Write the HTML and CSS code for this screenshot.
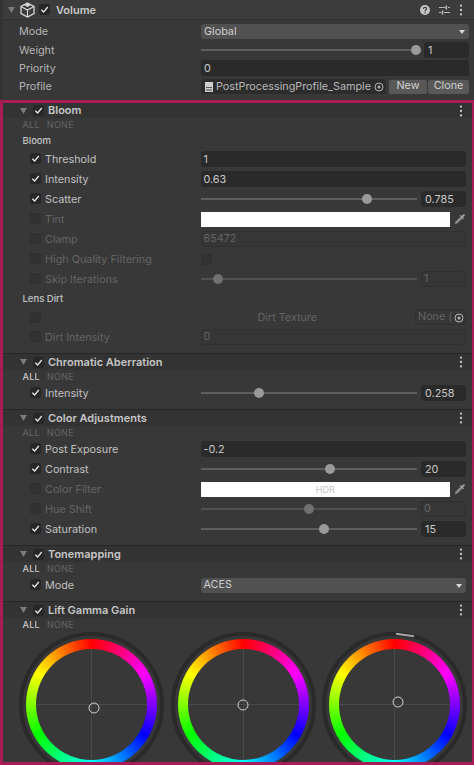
FILE: index.html
```html
<!DOCTYPE html>
<html lang="en">
<head>
<meta charset="utf-8">
<title>Volume Inspector</title>
<link rel="stylesheet" href="styles.css">
</head>
<body>
<svg class="sprite" width="0" height="0" aria-hidden="true">
  <symbol id="check" viewBox="0 0 11 11"><path d="M2.3 5.8 4.6 8 8.8 3" fill="none" stroke="#e6e6e6" stroke-width="1.3"/></symbol>
  <symbol id="tri" viewBox="0 0 8 7"><path d="M0 0h8L4 7z" fill="#7c7c7c"/></symbol>
  <symbol id="dots" viewBox="0 0 4 12"><circle cx="2" cy="1.6" r="1.15" fill="#c8c8c8"/><circle cx="2" cy="6" r="1.15" fill="#c8c8c8"/><circle cx="2" cy="10.4" r="1.15" fill="#c8c8c8"/></symbol>
  <symbol id="target" viewBox="0 0 10 10"><circle cx="5" cy="5" r="4" fill="none" stroke="#b4b4b4" stroke-width="1"/><circle cx="5" cy="5" r="1.5" fill="#b4b4b4"/></symbol>
  <symbol id="picker" viewBox="0 0 12 12"><path d="M6.800 3.400 8.600 5.200 3.200 10.600 1 11 1.400 8.800z" fill="#8e8e8e"/><path d="M5.800 2.800 9.200 6.200 10 5.400 8.900 4.300 10.800 2.400A1 1 0 0 0 9.600 1.200L7.700 3.100 6.600 2z" fill="#a8a8a8"/></symbol>
</svg>

<main class="inspector">
  <header class="comp-head">
    <svg class="tri-top" width="7" height="6"><use href="#tri"/></svg>
    <svg class="cube" width="15" height="16" viewBox="0 0 15 16"><path d="M7.5 1 14 4.4v7.2L7.5 15 1 11.6V4.4z" fill="none" stroke="#d8d8d8" stroke-width="1.3"/><path d="M1 4.4 7.5 8 14 4.4M7.5 8v7" fill="none" stroke="#d8d8d8" stroke-width="1.1"/><path d="M4 3 7.5 1.4 11 3 7.5 5z" fill="#d8d8d8"/></svg>
    <span class="cb on"><svg width="11" height="11"><use href="#check"/></svg></span>
    <strong class="comp-title">Volume</strong>
    <span class="head-icons">
      <svg width="10" height="10" viewBox="0 0 10 10"><circle cx="5" cy="5" r="5" fill="#c4c4c4"/><path d="M3.4 3.9c0-2 3.3-2 3.3-.1 0 1.200-1.700 1.200-1.700 2.400" fill="none" stroke="#3a3a3a" stroke-width="1.100"/><circle cx="5" cy="7.800" r=".7" fill="#3a3a3a"/></svg>
      <svg width="11" height="10" viewBox="0 0 11 10"><path d="M0 2.500h6M9 2.500h2M0 7.500h2M5 7.500h6" stroke="#b8b8b8" stroke-width="1.200"/><path d="M6.500 .5h1.600v4H6.500zM2.700 5.500h1.600v4H2.700z" fill="#b8b8b8"/></svg>
      <svg width="4" height="12"><use href="#dots"/></svg>
    </span>
  </header>

  <section class="volume-fields">
    <div class="vrow"><span>Mode</span><div class="dropdown">Global<i class="caret"></i></div></div>
    <div class="vrow"><span>Weight</span><div class="slider"><div class="track"><i class="thumb" style="left:98%"></i></div><div class="field num">1</div></div></div>
    <div class="vrow"><span>Priority</span><div class="field">0</div></div>
    <div class="vrow"><span>Profile</span>
      <div class="profile">
        <div class="field objfield"><svg class="asset" width="8" height="10" viewBox="0 0 8 10"><path d="M0 0h8v10H0z" fill="#cfcfcf"/><path d="M1 5h6v1H1z" fill="#555"/><path d="M1 7h6v2H1z" fill="#888"/></svg><span class="objname">PostProcessingProfile_Sample</span><svg width="10" height="10"><use href="#target"/></svg></div>
        <button class="btn new">New</button><button class="btn clone">Clone</button>
      </div>
    </div>
  </section>

  <div class="overrides">
    <section class="effect first">
      <div class="eff-head"><svg class="tri" width="7" height="6"><use href="#tri"/></svg><span class="cb on"><svg width="11" height="11"><use href="#check"/></svg></span><b>Bloom</b><svg class="dots" width="4" height="12"><use href="#dots"/></svg></div>
      <div class="allnone tall"><span>ALL</span><span>NONE</span></div>
      <div class="sublabel">Bloom</div>
      <div class="row"><span class="lab"><span class="cb on"><svg width="11" height="11"><use href="#check"/></svg></span>Threshold</span><div class="field">1</div></div>
      <div class="row"><span class="lab"><span class="cb on"><svg width="11" height="11"><use href="#check"/></svg></span>Intensity</span><div class="field">0.63</div></div>
      <div class="row"><span class="lab"><span class="cb on"><svg width="11" height="11"><use href="#check"/></svg></span>Scatter</span><div class="slider"><div class="track"><i class="thumb" style="left:77%"></i></div><div class="field num">0.785</div></div></div>
      <div class="row off"><span class="lab"><span class="cb"></span>Tint</span><div class="color"><div class="swatch"></div><svg width="12" height="12"><use href="#picker"/></svg></div></div>
      <div class="row off"><span class="lab"><span class="cb"></span>Clamp</span><div class="field">65472</div></div>
      <div class="row off"><span class="lab"><span class="cb"></span>High Quality Filtering</span><div class="toggle"><span class="cb"></span></div></div>
      <div class="row off"><span class="lab"><span class="cb"></span>Skip Iterations</span><div class="slider"><div class="track"><i class="thumb" style="left:8%"></i></div><div class="field num">1</div></div></div>
      <div class="sublabel lens">Lens Dirt</div>
      <div class="row off"><span class="lab"><span class="cb"></span></span><div class="dirt"><span>Dirt Texture</span><div class="field nonefield"><span>None (</span><svg width="10" height="10"><use href="#target"/></svg></div></div></div>
      <div class="row off"><span class="lab"><span class="cb"></span>Dirt Intensity</span><div class="field">0</div></div>
    </section>

    <section class="effect">
      <div class="eff-head"><svg class="tri" width="7" height="6"><use href="#tri"/></svg><span class="cb on"><svg width="11" height="11"><use href="#check"/></svg></span><b>Chromatic Aberration</b><svg class="dots" width="4" height="12"><use href="#dots"/></svg></div>
      <div class="allnone active"><span>ALL</span><span>NONE</span></div>
      <div class="row"><span class="lab"><span class="cb on"><svg width="11" height="11"><use href="#check"/></svg></span>Intensity</span><div class="slider"><div class="track"><i class="thumb" style="left:27%"></i></div><div class="field num">0.258</div></div></div>
    </section>

    <section class="effect">
      <div class="eff-head"><svg class="tri" width="7" height="6"><use href="#tri"/></svg><span class="cb on"><svg width="11" height="11"><use href="#check"/></svg></span><b>Color Adjustments</b><svg class="dots" width="4" height="12"><use href="#dots"/></svg></div>
      <div class="allnone"><span>ALL</span><span>NONE</span></div>
      <div class="row"><span class="lab"><span class="cb on"><svg width="11" height="11"><use href="#check"/></svg></span>Post Exposure</span><div class="field">-0.2</div></div>
      <div class="row"><span class="lab"><span class="cb on"><svg width="11" height="11"><use href="#check"/></svg></span>Contrast</span><div class="slider"><div class="track"><i class="thumb" style="left:60%"></i></div><div class="field num">20</div></div></div>
      <div class="row off"><span class="lab"><span class="cb"></span>Color Filter</span><div class="color"><div class="swatch">HDR</div><svg width="12" height="12"><use href="#picker"/></svg></div></div>
      <div class="row off"><span class="lab"><span class="cb"></span>Hue Shift</span><div class="slider"><div class="track"><i class="thumb" style="left:50%"></i></div><div class="field num">0</div></div></div>
      <div class="row"><span class="lab"><span class="cb on"><svg width="11" height="11"><use href="#check"/></svg></span>Saturation</span><div class="slider"><div class="track"><i class="thumb" style="left:57%"></i></div><div class="field num">15</div></div></div>
    </section>

    <section class="effect">
      <div class="eff-head"><svg class="tri" width="7" height="6"><use href="#tri"/></svg><span class="cb on"><svg width="11" height="11"><use href="#check"/></svg></span><b>Tonemapping</b><svg class="dots" width="4" height="12"><use href="#dots"/></svg></div>
      <div class="allnone active"><span>ALL</span><span>NONE</span></div>
      <div class="row"><span class="lab"><span class="cb on"><svg width="11" height="11"><use href="#check"/></svg></span>Mode</span><div class="dropdown">ACES<i class="caret"></i></div></div>
    </section>

    <section class="effect last">
      <div class="eff-head"><svg class="tri" width="7" height="6"><use href="#tri"/></svg><span class="cb on"><svg width="11" height="11"><use href="#check"/></svg></span><b>Lift Gamma Gain</b><svg class="dots" width="4" height="12"><use href="#dots"/></svg></div>
      <div class="allnone active"><span>ALL</span><span>NONE</span></div>
      <div class="wheels">
        <div class="wheel"><div class="hue"><div class="disc"><i class="handle" style="left:52%;top:53%"></i></div></div></div>
        <div class="wheel"><div class="hue"><div class="disc"><i class="handle" style="left:50%;top:50%"></i></div></div></div>
        <div class="wheel"><div class="gain"></div><div class="hue"><div class="disc"><i class="handle" style="left:53.500%;top:48%"></i></div></div></div>
      </div>
    </section>
  </div>
</main>
</body>
</html>
```
FILE: styles.css
```css
* { box-sizing: border-box; }
html, body { margin: 0; height: 765px; overflow: hidden; background: #383838; }
body { font: 400 10.800px/1 Inter, "Liberation Sans", sans-serif; color: #c4c4c4; }
.sprite { position: absolute; }
.inspector { width: 474px; height: 765px; display: flex; flex-direction: column; overflow: hidden; }

.comp-head { height: 20px; flex: none; display: flex; align-items: center; padding: 0 11px 0 5px; background: #3c3c3c; border-left: 3px solid #333; border-bottom: 1px solid #2f2f2f; }
.tri-top { margin-right: 5px; }
.cube { margin-right: 4px; }
.comp-head .cb { margin-right: 6px; }
.comp-title { font-weight: 600; font-size: 11px; color: #c8c8c8; padding-top: 2px; }
.head-icons { margin-left: auto; display: flex; align-items: center; gap: 9px; }

.cb { display: inline-flex; flex: none; width: 11px; height: 11px; background: #323232; border-radius: 2px; border: 1px solid #303030; }
.cb.on { background: #272727; border-color: #272727; }
.cb.on svg { margin: -1px; }

.volume-fields { flex: none; height: 80px; padding: 2.500px 5px 0 16px; border-left: 3px solid #333; }
.vrow { height: 18.300px; display: grid; grid-template-columns: 182px 1fr; align-items: center; color: #b4b4b4; }
.vrow > span { padding-top: 2px; }

.field { height: 15.500px; display: flex; align-items: center; padding: 2px 0 0 3px; background: #2a2a2a; border-radius: 3px; color: #c8c8c8; min-width: 0; white-space: nowrap; }
.dropdown { height: 15px; display: flex; align-items: center; justify-content: space-between; padding: 1px 4px 0 3px; background: #515151; border-radius: 3px; color: #d0d0d0; }
.caret { width: 0; height: 0; border: 3.500px solid transparent; border-top: 4px solid #d8d8d8; border-bottom: 0; }

.slider { display: flex; align-items: center; gap: 4px; }
.track { flex: 1; height: 2px; background: #5e5e5e; position: relative; }
.thumb { position: absolute; top: 50%; width: 10px; height: 10px; border-radius: 50%; background: #9a9a9a; transform: translate(-50%, -50%); }
.slider .num { width: 45px; flex: none; padding-left: 4px; }

.profile { display: flex; align-items: center; min-width: 0; }
.objfield { flex: 1; background: #2c2c2c; padding: 1px 2px 0 4px; height: 15px; margin-right: 3px; }
.asset { margin-right: 3px; flex: none; }
.objname { flex: 1; color: #b8b8b8; min-width: 0; }
.btn { flex: none; height: 14px; padding: 0; border: 0; border-radius: 2px; background: #585858; color: #d0d0d0; font: inherit; }
.new { width: 38px; margin-right: 1px; }
.clone { width: 41px; }

.overrides { flex: 1; min-height: 0; overflow: hidden; border: solid #a81c58; border-width: 3.500px 2px 3px 3.500px; }
.effect { padding-bottom: 6px; }
.eff-head { height: 17px; display: flex; align-items: center; padding: 0 9px 0 17px; background: #333333; border-top: 1px solid #262626; }
.first .eff-head { height: 15px; border-top: 0; }
.tri { margin-right: 6px; }
.eff-head .cb { margin-right: 4px; }
.eff-head b { font-weight: 600; font-size: 11px; color: #c6c6c6; padding-top: 1px; }
.first .eff-head b { padding-top: 0; }
.dots { margin-left: auto; }

.allnone { height: 13px; display: flex; align-items: center; gap: 7px; padding-left: 19.500px; font-size: 9px; letter-spacing: .3px; color: #666; }
.allnone.tall { height: 14px; padding-bottom: 1px; }
.allnone.active span:first-child { color: #c8c8c8; font-weight: 500; }
.sublabel { height: 17px; display: flex; align-items: center; padding-left: 19.500px; font-size: 9.500px; font-weight: 500; color: #c4c4c4; }
.sublabel.lens { height: 18px; padding-top: 1px; }

.row { height: 20px; display: grid; grid-template-columns: 171px 1fr; align-items: center; padding: 0 6px 0 26.500px; color: #c0c0c0; }
.lab { display: flex; align-items: center; gap: 4.500px; white-space: nowrap; padding-top: 2px; }
.lab .cb { margin-top: -2px; }
.off { color: #646464; }
.off .field { background: #363636; border: 1px solid #303030; color: #646464; padding-top: 1px; padding-left: 2px; }
.off .thumb { background: #707070; }
.off .track { background: #505050; }
.toggle { display: flex; align-items: center; }

.color { display: flex; align-items: center; gap: 4px; }
.swatch { flex: 1; height: 15px; background: #fff; display: flex; align-items: center; justify-content: center; font-size: 9px; color: #c4c4c4; }
.dirt { display: flex; align-items: center; justify-content: space-between; padding-left: 57px; }
.dirt > span { padding-top: 2px; }
.off .nonefield { width: 51px; justify-content: space-between; padding-right: 1px; }

.wheels { display: flex; gap: 6.500px; padding: 1px 0 0 16px; }
.wheel { position: relative; flex: none; width: 145px; height: 145px; border-radius: 50%; border: 4px solid #2a2a2a; display: flex; align-items: center; justify-content: center; }
.hue { width: 131px; height: 131px; border-radius: 50%; padding: 10px; background: conic-gradient(#f00, #f0f 60deg, #00f 120deg, #0ff 180deg, #0f0 240deg, #ff0 300deg, #f00 360deg); }
.disc { position: relative; width: 100%; height: 100%; border-radius: 50%; background: linear-gradient(#4a4a4a, #4a4a4a) center / 1px 100% no-repeat, linear-gradient(#4a4a4a, #4a4a4a) center / 100% 1px no-repeat, #383838; }
.handle { position: absolute; width: 11px; height: 11px; border: 1.500px solid #d0d0d0; border-radius: 50%; transform: translate(-50%, -50%); }
.gain { position: absolute; top: -2px; left: 70px; width: 18px; height: 2px; background: #a8a8a8; transform: rotate(8deg); }
```
